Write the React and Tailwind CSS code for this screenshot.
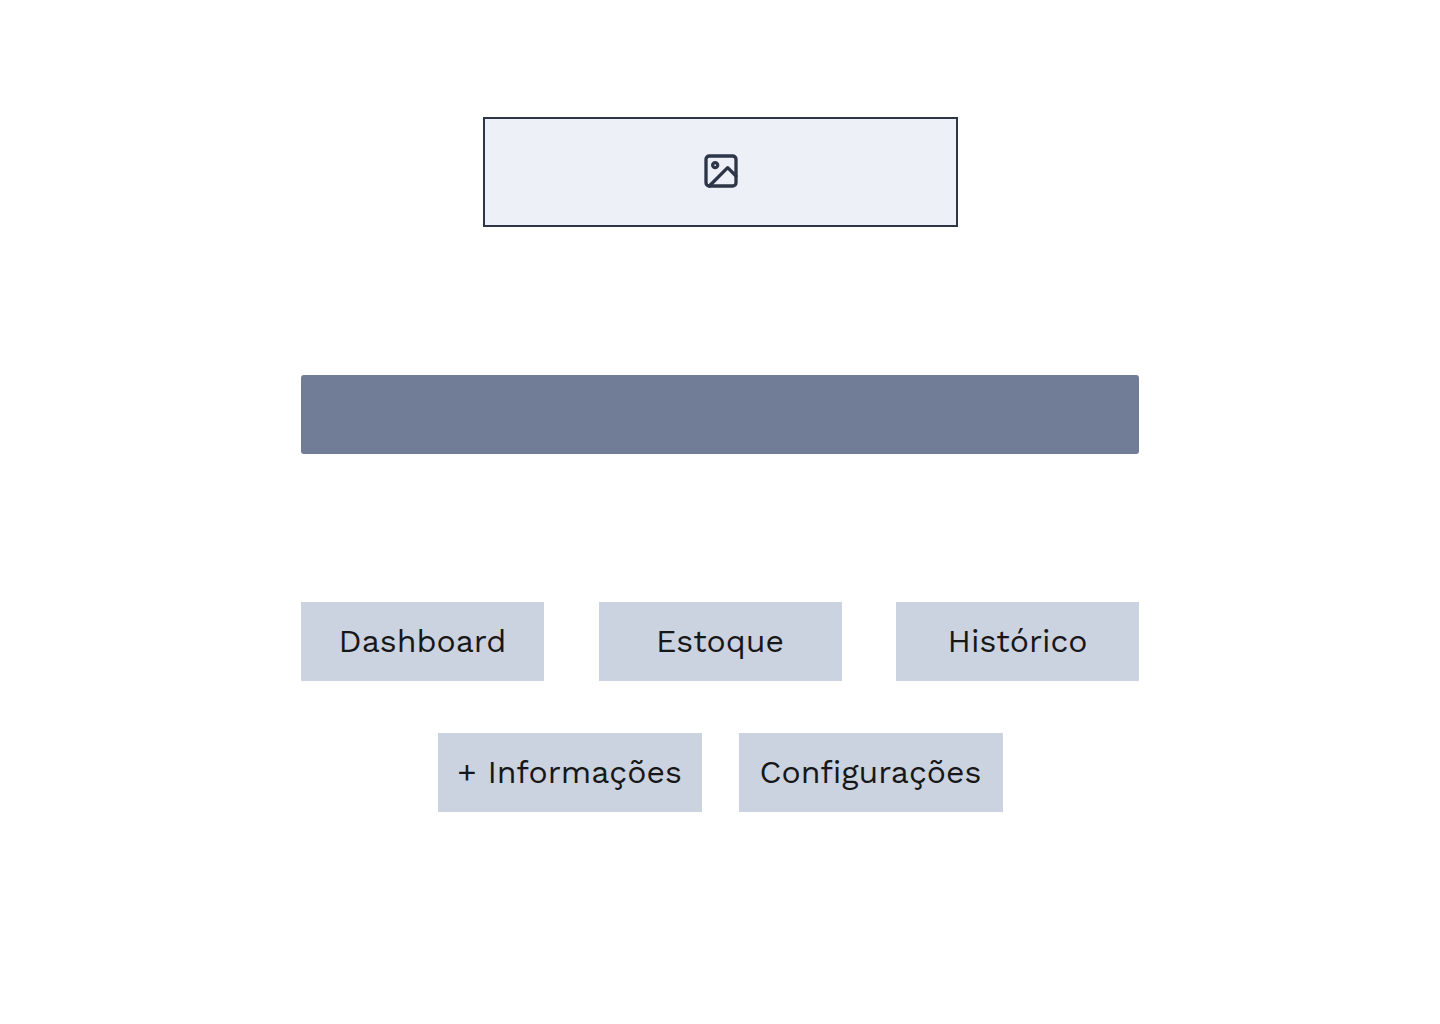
const navItem =
  "h-[79px] pb-0.5 bg-[#cbd2e0] text-[32px] leading-10 text-[#171717] whitespace-nowrap cursor-pointer";

function ImageIcon() {
  return (
    <svg
      viewBox="0 0 24 24"
      className="size-10"
      fill="none"
      stroke="#2d3648"
      strokeWidth="2"
      strokeLinecap="round"
      strokeLinejoin="round"
      aria-hidden="true"
    >
      <rect x="3" y="3" width="18" height="18" rx="2" />
      <circle cx="8.5" cy="8.5" r="1.5" />
      <path d="M21 15 L16 10 L5 21" />
    </svg>
  );
}

export default function App() {
  return (
    <main className="flex min-h-screen flex-col items-center bg-white px-6 pt-[117px] pb-16 font-['Work_Sans','Inter',sans-serif]">
      <div
        role="img"
        aria-label="Logo"
        className="flex h-[110px] w-full max-w-[475px] items-center justify-center border-2 border-[#2d3648] bg-[#edf0f7] pb-0.5 pl-px"
      >
        <ImageIcon />
      </div>

      <input
        type="text"
        aria-label="Buscar"
        className="mt-[148px] h-[79px] w-full max-w-[838px] rounded-[3px] bg-[#717d96] px-6 text-[32px] text-white outline-none"
      />

      <nav className="mt-[148px] flex w-full max-w-[838px] flex-col items-center gap-13">
        <div className="flex w-full flex-wrap justify-between gap-4">
          <button type="button" className={`${navItem} w-[243px]`}>Dashboard</button>
          <button type="button" className={`${navItem} w-[243px]`}>Estoque</button>
          <button type="button" className={`${navItem} w-[243px]`}>Histórico</button>
        </div>
        <div className="flex flex-wrap justify-center gap-[37px]">
          <button type="button" className={`${navItem} w-[264px]`}>+ Informações</button>
          <button type="button" className={`${navItem} w-[264px]`}>Configurações</button>
        </div>
      </nav>
    </main>
  );
}
